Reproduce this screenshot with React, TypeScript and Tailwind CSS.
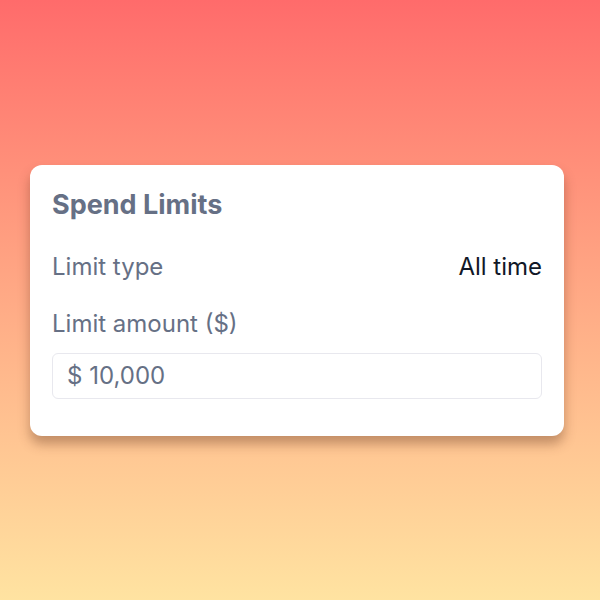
export default function App() {
  return (
    <div
      className="w-[600px] h-[600px] bg-gradient-to-b from-[#ff6b6b] to-[#ffe3a1] flex items-center pl-[30px]"
      style={{ fontFamily: "Inter, 'Liberation Sans', sans-serif" }}
    >
      <div className="w-[534px] bg-white rounded-xl shadow-[0_8px_12px_rgba(80,40,20,0.35)] px-[22px] pt-[23px] pb-[37px]">
        <h2 className="text-[27px] leading-[34px] font-bold text-[#667085]">Spend Limits</h2>

        <div className="mt-[29px] flex items-center justify-between text-2xl leading-8">
          <span className="text-[#667085]">Limit type</span>
          <span className="text-[#111827]">All time</span>
        </div>

        <div className="mt-[25px] text-2xl leading-8 text-[#667085]">Limit amount ($)</div>

        <div className="mt-[13px] h-[46px] border border-[#e8e8ee] rounded-md flex items-center px-[14px] text-2xl text-[#667085]">
          $ 10,000
        </div>
      </div>
    </div>
  );
}
